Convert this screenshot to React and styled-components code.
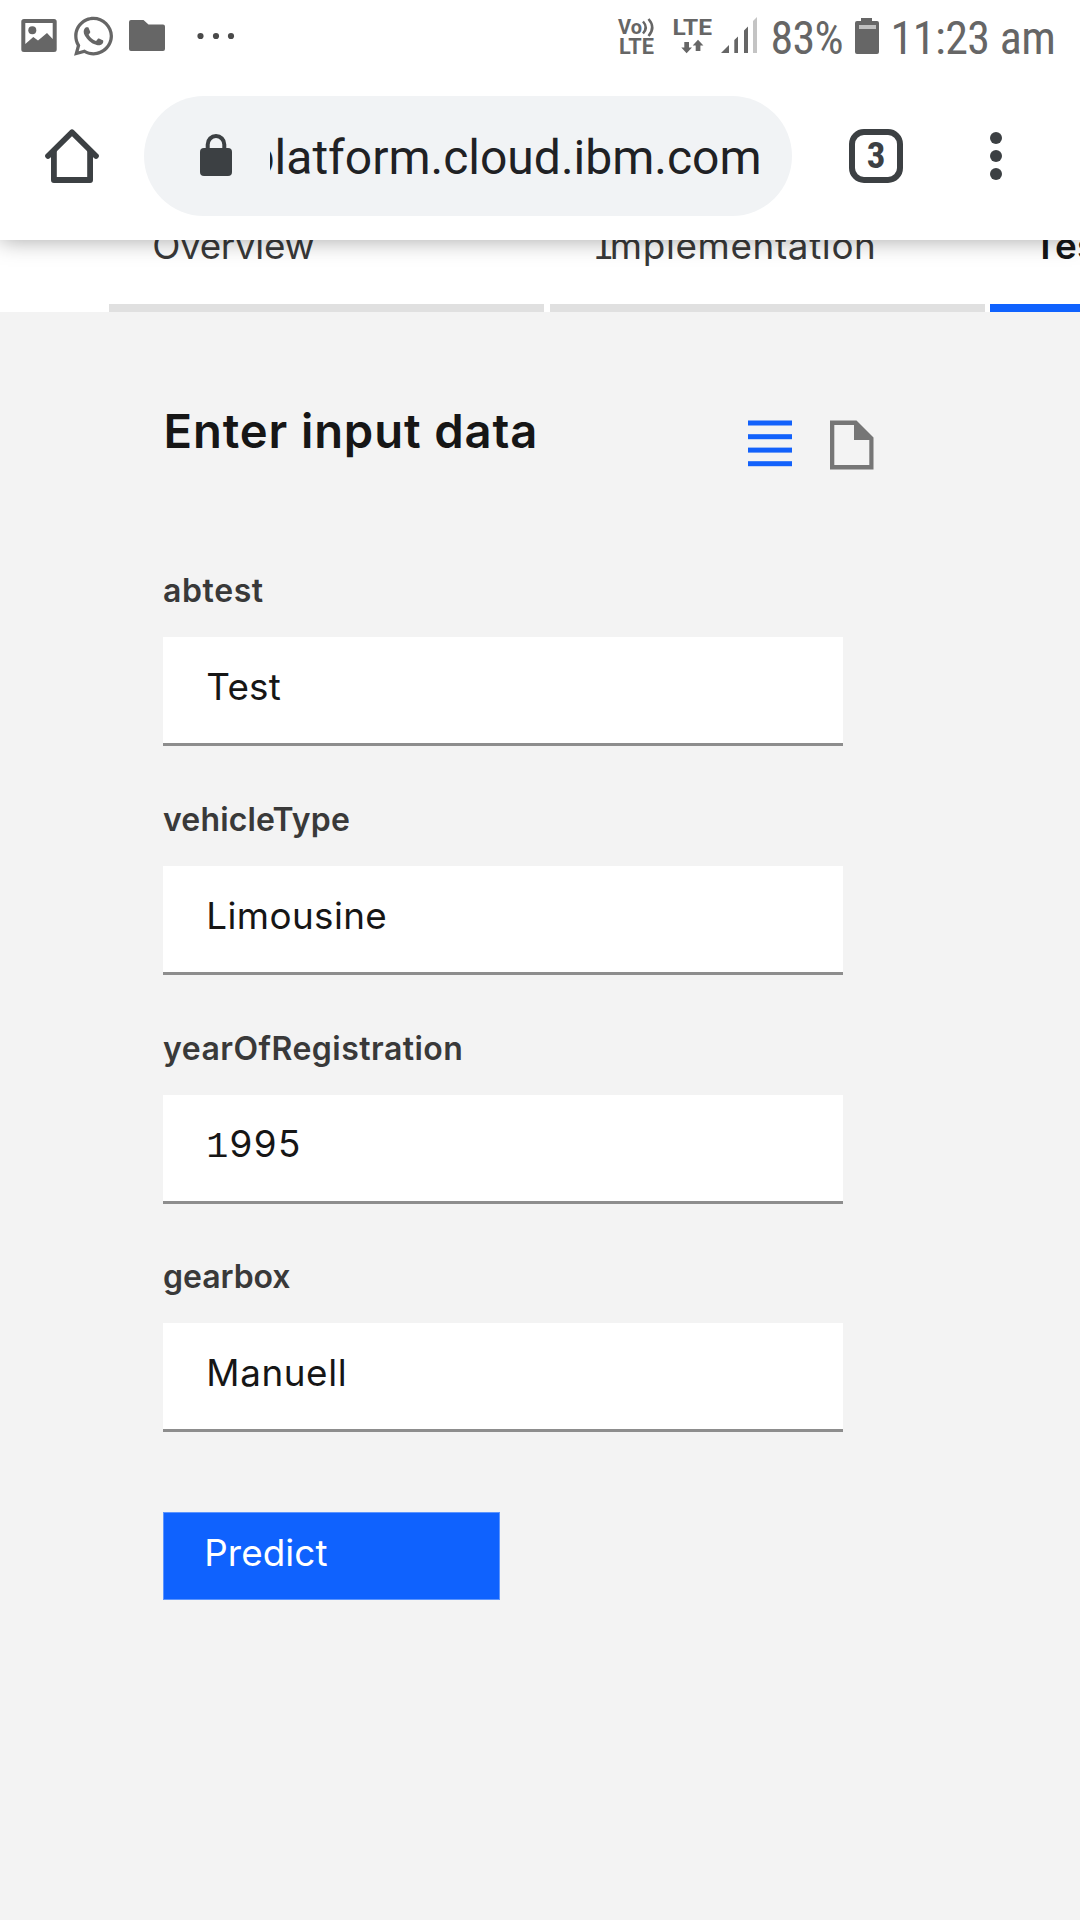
import React from 'react';
import styled, { createGlobalStyle } from 'styled-components';
import { FaWhatsapp } from 'react-icons/fa';

const GlobalStyle = createGlobalStyle`
  html, body { margin: 0; padding: 0; background: #f3f3f3; }
  * { box-sizing: border-box; }
  body { overflow: hidden; }
`;

const Screen = styled.div`
  width: 1080px;
  height: 1920px;
  overflow: hidden;
  display: flex;
  flex-direction: column;
  background: #f3f3f3;
  font-family: Inter, 'Liberation Sans', sans-serif;
  color: #161616;
`;

const Header = styled.header`
  position: relative;
  z-index: 1;
  flex: none;
  height: 240px;
  background: #fff;
  box-shadow: 0 0 22px rgba(0, 0, 0, 0.36);
`;

const StatusBar = styled.div`
  display: flex;
  height: 72px;
  padding: 0 20px;
  color: #666;
`;

const StatusGroup = styled.div`
  display: flex;
  margin-left: ${(p) => (p.$end ? 'auto' : '0')};
`;

const StatusIcon = styled.svg`
  display: block;
  flex: none;
  height: 72px;
  fill: currentColor;
`;

const WhatsappIcon = styled(FaWhatsapp)`
  display: block;
  flex: none;
  width: 39px;
  height: 44.5px;
  margin: 14px 16.5px 0;
`;

const StatusText = styled.span`
  font-family: 'Roboto Condensed', Roboto, sans-serif;
  font-size: 46px;
  line-height: 76px;
  white-space: nowrap;
  width: ${(p) => p.$width}px;
  padding-left: ${(p) => p.$indent || 0}px;
  letter-spacing: ${(p) => p.$tracking}px;
`;

const Toolbar = styled.div`
  display: flex;
  align-items: center;
  height: 168px;
  padding: 0 72px 0 45px;
  color: #3c4043;
`;

const HomeIcon = styled.svg`
  flex: none;
  width: 54px;
  height: 54px;
  margin-right: 45px;
`;

const AddressBar = styled.div`
  display: flex;
  align-items: center;
  width: 648px;
  height: 120px;
  padding-left: 56px;
  border-radius: 60px;
  background: #f1f3f5;
`;

const LockIcon = styled.svg`
  flex: none;
  width: 32px;
  height: 42px;
  margin: 0 38px 2px 0;
`;

const Address = styled.div`
  display: flex;
  justify-content: flex-end;
  width: 491.5px;
  overflow: hidden;
  padding-top: 3px;
  font-family: Roboto, sans-serif;
  font-size: 48px;
  line-height: 60px;
  color: #202124;
  white-space: nowrap;
`;

const TabCount = styled.div`
  display: flex;
  align-items: center;
  justify-content: center;
  width: 54px;
  height: 54px;
  margin-left: 57px;
  border: 6px solid #3c4043;
  border-radius: 15px;
  font-family: 'Roboto Condensed', Roboto, sans-serif;
  font-size: 37px;
  font-weight: 700;
  line-height: 42px;
`;

const MoreIcon = styled.svg`
  width: 12px;
  height: 48px;
  margin-left: 87px;
`;

const TabStrip = styled.nav`
  display: flex;
  flex: none;
  gap: 5.4px;
  height: 72px;
  padding-left: 109px;
  overflow: hidden;
  background: #fff;
`;

const Tab = styled.div`
  flex: none;
  width: 435.2px;
  height: 72px;
  padding-left: 43.2px;
  border-bottom: 8.5px solid ${(p) => (p.$active ? '#0f62fe' : '#e0e0e0')};
`;

const TabLabel = styled.div`
  margin-top: -13.5px;
  font-size: 36.8px;
  line-height: 38px;
  font-weight: ${(p) => (p.$active ? 600 : 370)};
  color: ${(p) => (p.$active ? '#161616' : '#393939')};
  letter-spacing: ${(p) => p.$tracking}px;
  white-space: nowrap;

  &::first-letter {
    font-family: ${(p) => (p.$slabInitial ? "'Liberation Mono', monospace" : 'inherit')};
    letter-spacing: ${(p) => (p.$slabInitial ? '-5px' : 'inherit')};
  }
`;

const Content = styled.main`
  flex: 1;
  padding: 91.8px 0 0 163px;
`;

const TitleRow = styled.div`
  display: flex;
  height: 56px;
  margin-bottom: 111.6px;
`;

const Title = styled.h1`
  margin: 0;
  width: 585px;
  padding-left: 0.6px;
  font-size: 47.2px;
  line-height: 53px;
  font-weight: 600;
  letter-spacing: 0.86px;
  white-space: nowrap;
`;

const ViewIcon = styled.svg`
  flex: none;
  width: 44px;
  height: 50px;
  margin: 16px 38px 0 0;
`;

const Field = styled.label`
  display: block;
  width: 680px;
  margin-bottom: 53.8px;
`;

const FieldName = styled.div`
  height: 40px;
  margin-bottom: 26px;
  font-size: 32px;
  line-height: 40.5px;
  font-weight: 600;
  color: #393939;
  letter-spacing: ${(p) => p.$tracking}px;
`;

const FieldBox = styled.div`
  height: 108.9px;
  padding: 26.5px 0 0 43.3px;
  background: #fff;
  border-bottom: 3px solid #8d8d8d;
`;

const FieldValue = styled.div`
  font-size: 36.8px;
  line-height: 46px;
  font-weight: 375;
  letter-spacing: ${(p) => p.$tracking}px;

  &::first-letter {
    font-family: ${(p) => (p.$slabInitial ? "'Liberation Mono', monospace" : 'inherit')};
    letter-spacing: ${(p) => (p.$slabInitial ? '1px' : 'inherit')};
  }
`;

const PredictButton = styled.button`
  display: flex;
  align-items: center;
  width: 337px;
  height: 88px;
  margin: 79.5px 0 0;
  padding: 0 0 7px 40.2px;
  border: 1px solid #5c95fe;
  background: #0f62fe;
  color: #fff;
  font-family: inherit;
  font-size: 36.8px;
  font-weight: 370;
  letter-spacing: 0.1px;
`;

const tabs = [
  { label: 'Overview', tracking: -0.3 },
  { label: 'Implementation', tracking: 0.65, slabInitial: true },
  { label: 'Test', tracking: 0.3, active: true },
];

const fields = [
  { name: 'abtest', nameTracking: 0.6, value: 'Test', tracking: 0.2 },
  { name: 'vehicleType', nameTracking: 0.15, value: 'Limousine', tracking: 0.4 },
  { name: 'yearOfRegistration', nameTracking: 0.48, value: '1995', tracking: 1.5, slabInitial: true },
  { name: 'gearbox', nameTracking: -0.05, value: 'Manuell', tracking: 0.6 },
];

export default function App() {
  return (
    <Screen>
      <GlobalStyle />
      <Header>
        <StatusBar>
          <StatusGroup>
            <StatusIcon width="37" viewBox="20 0 37 72">
              <path fillRule="evenodd" d="M24 19H54Q56.7 19 56.7 21.5V49.5Q56.7 52 54 52H24Q21.3 52 21.3 49.5V21.5Q21.3 19 24 19ZM25.3 23V44L33.3 37L38 40.5L47 33L52.7 39V23Z" />
              <circle cx="32.3" cy="30.3" r="4" />
            </StatusIcon>
            <WhatsappIcon />
            <StatusIcon width="108" viewBox="129 0 108 72">
              <path d="M131 20H143.5L148.5 24.5H163Q165 24.5 165 26.5V49Q165 51 163 51H131Q129 51 129 49V22Q129 20 131 20Z" />
              <g fill="#4a4a4a">
                <circle cx="200.5" cy="36" r="3.1" />
                <circle cx="216" cy="36" r="3.1" />
                <circle cx="231" cy="36" r="3.1" />
              </g>
            </StatusIcon>
          </StatusGroup>
          <StatusGroup $end>
            <StatusIcon width="154.5" viewBox="616 0 154.5 72">
              <g fontFamily="Roboto, sans-serif" fontWeight="700">
                <text x="618" y="33.5" fontSize="20" textLength="24">Vo</text>
                <text x="619" y="53.7" fontSize="21.5" textLength="35" lengthAdjust="spacingAndGlyphs">LTE</text>
                <text x="672.5" y="35" fontSize="22.5" textLength="39.5" lengthAdjust="spacingAndGlyphs">LTE</text>
              </g>
              <g fill="none" stroke="currentColor" strokeWidth="2.5">
                <path d="M643 21.5Q648.5 27.5 643 33.5" />
                <path d="M648.5 19Q656 27.5 648.5 36" />
              </g>
              <path d="M684.3 42H689V47.5H692L686.6 53.3L681.3 47.5H684.3Z" />
              <path d="M695.7 51V45.5H692.7L698 39.7L703.4 45.5H700.4V51Z" />
              <path d="M721 53L729 45V53ZM734.3 53V40L738 36.5V53ZM744 53V30.5L748 26.5V53Z" />
              <path fill="#c4c4c4" d="M753 53V21L757 17V53Z" />
            </StatusIcon>
            <StatusText $width={84.5} $tracking={-0.7}>83%</StatusText>
            <StatusIcon width="24" viewBox="855 0 24 72">
              <path d="M861 21V18H872V21H877Q879 21 879 23V52Q879 54 877 54H857Q855 54 855 52V23Q855 21 857 21Z" />
              <rect x="859" y="25" width="17" height="4" fill="#c0c0c0" />
            </StatusIcon>
            <StatusText $width={181} $indent={11.5} $tracking={-0.5}>11:23 am</StatusText>
          </StatusGroup>
        </StatusBar>
        <Toolbar>
          <HomeIcon viewBox="45 129 54 54" fill="none" stroke="currentColor">
            <path strokeWidth="5.7" strokeLinecap="round" strokeLinejoin="round" d="M48 156L72 132.3L96 156" />
            <path strokeWidth="5.8" strokeLinejoin="round" d="M53.9 151V180H90.1V151" />
          </HomeIcon>
          <AddressBar>
            <LockIcon viewBox="200 134 32 42">
              <rect x="200" y="148" width="32" height="28" rx="4" fill="currentColor" />
              <path d="M207.7 149V144.5A8.3 8.5 0 0 1 224.3 144.5V149" fill="none" stroke="currentColor" strokeWidth="4" />
            </LockIcon>
            <Address>platform.cloud.ibm.com</Address>
          </AddressBar>
          <TabCount>3</TabCount>
          <MoreIcon viewBox="0 0 12 48" fill="currentColor">
            <circle cx="6" cy="6" r="6" />
            <circle cx="6" cy="24" r="6" />
            <circle cx="6" cy="42" r="6" />
          </MoreIcon>
        </Toolbar>
      </Header>
      <TabStrip>
        {tabs.map((t) => (
          <Tab key={t.label} $active={t.active}>
            <TabLabel $active={t.active} $tracking={t.tracking} $slabInitial={t.slabInitial}>{t.label}</TabLabel>
          </Tab>
        ))}
      </TabStrip>
      <Content>
        <TitleRow>
          <Title>Enter input data</Title>
          <ViewIcon viewBox="748 420 44 50" fill="#1261fb">
            <rect x="748" y="420.5" width="44" height="5" />
            <rect x="748" y="434.2" width="44" height="5" />
            <rect x="748" y="447.6" width="44" height="5" />
            <rect x="748" y="461.2" width="44" height="5" />
          </ViewIcon>
          <ViewIcon viewBox="830 420 44 50" fill="#767676">
            <path fillRule="evenodd" d="M830 420.5H856.5L873.5 437.5V469.5H830ZM834.3 425V465H869.3V440H854V425Z" />
          </ViewIcon>
        </TitleRow>
        {fields.map((f) => (
          <Field key={f.name}>
            <FieldName $tracking={f.nameTracking}>{f.name}</FieldName>
            <FieldBox>
              <FieldValue $tracking={f.tracking} $slabInitial={f.slabInitial}>{f.value}</FieldValue>
            </FieldBox>
          </Field>
        ))}
        <PredictButton>Predict</PredictButton>
      </Content>
    </Screen>
  );
}
